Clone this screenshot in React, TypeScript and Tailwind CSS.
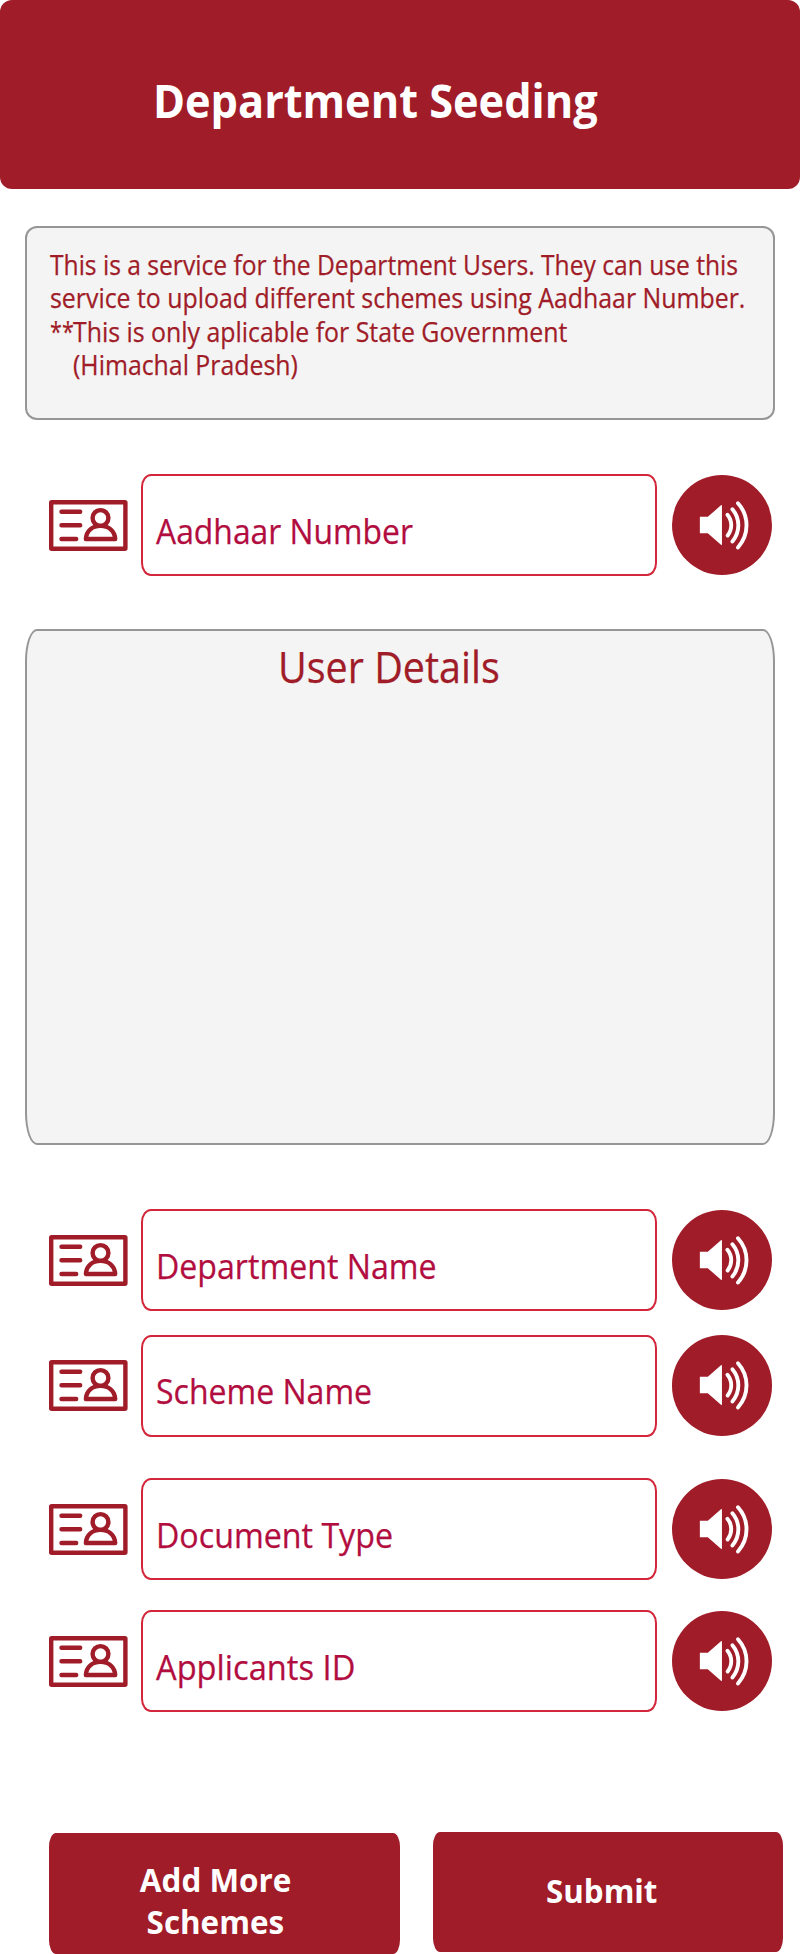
function IdCardIcon() {
  return (
    <svg className="h-[51px] w-[79px] shrink-0" viewBox="0 0 79 51" fill="none" stroke="#a01c28" strokeWidth="4.4" strokeLinecap="round" strokeLinejoin="round">
      <rect x="2.2" y="2.2" width="74.2" height="46.6" rx="0.5" />
      <path d="M12.5 11.8H31.2M12.5 25.3H31.2M12.5 39H27.2" />
      <circle cx="51.5" cy="18" r="7.9" />
      <path d="M36.9 39H66.2C65.7 30.6 59.5 25.9 51.5 25.9S37.3 30.6 36.9 39Z" />
    </svg>
  );
}

function SpeakerButton() {
  return (
    <button aria-label="Listen" className="ml-[15px] h-[100.5px] w-[100.5px] shrink-0 rounded-full bg-[#a01c28]">
      <svg className="h-[100.5px] w-[100.5px]" viewBox="0 0 101 101" fill="none" stroke="#fff" strokeWidth="3.9" strokeLinecap="round">
        <path d="M28 42H36L49.2 30.5Q50.2 29.8 50.2 31V69.7Q50.2 71 49.2 70.2L36 58.5H28Z" fill="#fff" stroke="none" />
        <path d="M55.7 40A16.4 16.4 0 0 1 55.9 60.8" />
        <path d="M60.7 34.4A25 25 0 0 1 60.7 66.8" />
        <path d="M66.3 28.4A33 33 0 0 1 66.3 72.8" />
      </svg>
    </button>
  );
}

function Field({ label, className, textClass }: { label: string; className: string; textClass: string }) {
  return (
    <div className={`ml-[49px] flex h-[102px] items-center ${className}`}>
      <IdCardIcon />
      <div className="ml-[13px] h-[102px] w-[515.5px] shrink-0 rounded-[10px/13px] border-2 border-[#d3263a] bg-white pt-[34.5px] pl-[13px]">
        <span className={`block w-max origin-left text-[34px] leading-[40px] text-[#b20d3f] [-webkit-text-stroke:0.25px_#b20d3f] ${textClass}`}>{label}</span>
      </div>
      <SpeakerButton />
    </div>
  );
}

export default function App() {
  return (
    <main className="h-[1954px] w-[800px] overflow-hidden bg-white font-['Open_Sans','Noto_Sans',sans-serif] whitespace-nowrap">
      <header className="h-[188.5px] rounded-xl bg-[#a01c28] pt-[70px] pl-[153px]">
        <h1 className="w-max origin-left scale-x-[0.941] text-[46px] leading-[60px] font-bold text-white">Department Seeding</h1>
      </header>

      <section className="mx-[25px] mt-[37.5px] h-[194px] rounded-xl border-2 border-[#969696] bg-[#f4f4f4] pt-[19.8px] pl-[22.5px] text-[27px] leading-[33.5px] text-[#a01c28] [-webkit-text-stroke:0.25px_#a01c28]">
        <p className="w-max origin-left scale-x-[0.911]">This is a service for the Department Users. They can use this</p>
        <p className="w-max origin-left scale-x-[0.921]">service to upload different schemes using Aadhaar Number.</p>
        <p className="flex w-max">
          <span className="w-[23px] origin-left scale-x-[0.8]">**</span>
          <span className="origin-left scale-x-[0.921]">This is only aplicable for State Government</span>
        </p>
        <p className="ml-[23.5px] w-max origin-left scale-x-[0.92]">(Himachal Pradesh)</p>
      </section>

      <Field label="Aadhaar Number" className="mt-[54px]" textClass="scale-x-[0.937]" />

      <section className="mx-[25px] mt-[53px] h-[516px] rounded-[12px/32px] border-2 border-[#969696] bg-[#f4f4f4] pt-[8.5px] pl-[251px]">
        <h2 className="w-max origin-left scale-x-[0.918] text-[43px] leading-[54px] text-[#a01c28] [-webkit-text-stroke:0.25px_#a01c28]">User Details</h2>
      </section>

      <Field label="Department Name" className="mt-[64px]" textClass="scale-x-[0.945]" />
      <Field label="Scheme Name" className="mt-[23.5px]" textClass="scale-x-[0.942]" />
      <Field label="Document Type" className="mt-[41.5px]" textClass="scale-x-[0.947]" />
      <Field label="Applicants ID" className="mt-[30px]" textClass="scale-x-[0.96]" />

      <div className="mt-[120px] ml-[49px] flex items-start gap-[33px] text-[33px] leading-[42px] font-bold text-white">
        <button className="mt-px flex h-[120.5px] w-[350.5px] flex-col items-center rounded-[7px/14px] bg-[#a01c28] pt-[26px] pr-[18px]">
          <span className="scale-x-[0.952]">Add More</span>
          <span className="scale-x-[0.95]">Schemes</span>
        </button>
        <button className="flex h-[120px] w-[350.5px] flex-col items-center rounded-[7px/14px] bg-[#a01c28] pt-[38px] pr-[12px]">
          <span className="scale-x-[0.947]">Submit</span>
        </button>
      </div>
    </main>
  );
}
